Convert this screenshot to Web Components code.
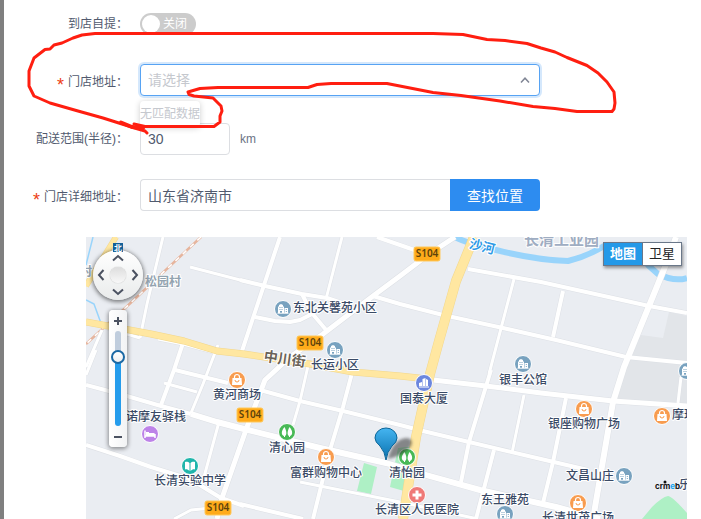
<!DOCTYPE html>
<html lang="zh-CN">
<head>
<meta charset="utf-8">
<title>门店设置</title>
<style>
html, body { margin: 0; min-height: 100%; }
body { background: #fff; color: #515a6e; font: 12px/18px "Liberation Sans", "Noto Sans CJK SC", sans-serif; }
</style>
</head>
<body>
<store-panel>
  <field-group>
    <switch-field label="到店自提：" text="关闭"></switch-field>
    <select-field label="门店地址：" required placeholder="请选择" empty="无匹配数据"></select-field>
  </field-group>
  <field-group>
    <range-field label="配送范围(半径)：" value="30">km</range-field>
    <search-field label="门店详细地址：" required value="山东省济南市">查找位置</search-field>
  </field-group>
  <store-map slot="map"></store-map>
  <red-note slot="note"></red-note>
</store-panel>

<script>
const FONT = '"Liberation Sans", "Noto Sans CJK SC", sans-serif';

class BaseElement extends HTMLElement {
  connectedCallback() {
    if (this.shadowRoot) return;
    this.attachShadow({ mode: 'open' }).innerHTML = this.render();
  }
}

customElements.define('store-panel', class extends BaseElement {
  render() {
    return `<style>
      :host { display: block; position: relative; box-sizing: border-box; min-height: 100vh; border-left: 4px solid #7f7f7f; padding-top: 8px; overflow: hidden; }
      form { display: flex; flex-direction: column; gap: 27px; max-width: 536px; }
    </style>
    <form><slot></slot></form><slot name="map"></slot><slot name="note"></slot>`;
  }
});

customElements.define('field-group', class extends BaseElement {
  render() {
    return `<style>:host { display: flex; flex-direction: column; gap: 24px; }</style><slot></slot>`;
  }
});

class FieldElement extends BaseElement {
  render() {
    return `<style>
      :host { display: grid; grid-template-columns: 124px 1fr; column-gap: 12px; align-items: center; min-height: 32px; }
      * { box-sizing: border-box; }
      .name { display: flex; justify-content: flex-end; align-items: center; gap: 4px; white-space: nowrap; font-size: 12px; line-height: 18px; }
      :host([required]) .name { padding-top: 3px; }
      .name i { color: #ed4014; font: 18px/18px ${FONT}; height: 12px; }
      .box { width: 100%; height: 32px; border: 1px solid #dcdee2; border-radius: 4px; padding: 0 7px; margin: 0; background: #fff; color: #515a6e; font: 14px ${FONT}; outline: none; }
      ${this.css()}
    </style>
    <label class="name" for="control">${this.hasAttribute('required') ? '<i>*</i>' : ''}<span>${this.getAttribute('label')}</span></label>
    ${this.control()}`;
  }
}

customElements.define('switch-field', class extends FieldElement {
  css() {
    return `
      .switch { position: relative; display: flex; align-items: center; justify-self: start; width: 56px; height: 22px; border-radius: 11px; padding: 0 9px 0 2px; gap: 3px; background: #ccc; color: #fff; font-size: 12px; }
      .switch input { appearance: none; margin: 0; width: 18px; height: 18px; border-radius: 9px; background: #fff; flex: none; }
      .switch span { white-space: nowrap; }`;
  }
  control() {
    return `<label class="switch"><input id="control" type="checkbox" role="switch"><span>${this.getAttribute('text')}</span></label>`;
  }
});

customElements.define('select-field', class extends FieldElement {
  css() {
    return `
      .wrap { position: relative; }
      select.box { display: block; appearance: none; border-color: #57a3f3; box-shadow: 0 0 0 2px rgba(45,140,240,.2); color: #c5c8ce; }
      svg { position: absolute; right: 10px; top: 11px; pointer-events: none; }
      .menu { position: absolute; z-index: 2; left: 0; top: 37px; height: 26px; line-height: 26px; background: #fff; color: #c5c8ce; border-radius: 4px; box-shadow: 0 1px 6px rgba(0,0,0,.2); white-space: nowrap; }`;
  }
  control() {
    return `<div class="wrap"><select id="control" class="box"><option>${this.getAttribute('placeholder')}</option></select>
      <svg width="10" height="10" viewBox="0 0 10 10" fill="none" stroke="#808695" stroke-width="1.5"><path d="M1 7.5 5 3.2 9 7.5"/></svg>
      <div class="menu">${this.getAttribute('empty')}</div></div>`;
  }
});

customElements.define('range-field', class extends FieldElement {
  css() {
    return `.wrap { display: flex; align-items: center; gap: 10px; } .wrap .box { width: 90px; } .unit { color: #6b7385; }`;
  }
  control() {
    return `<div class="wrap"><input id="control" class="box" type="text" value="${this.getAttribute('value')}"><span class="unit"><slot></slot></span></div>`;
  }
});

customElements.define('search-field', class extends FieldElement {
  css() {
    return `
      .wrap { display: flex; }
      .wrap .box { flex: 1; min-width: 0; border-radius: 4px 0 0 4px; border-right: 0; }
      button { width: 90px; height: 32px; border: 0; border-radius: 0 4px 4px 0; padding: 0; background: #2d8cf0; color: #fff; font: 14px ${FONT}; }`;
  }
  control() {
    return `<div class="wrap"><input id="control" class="box" type="text" value="${this.getAttribute('value')}"><button type="button"><slot></slot></button></div>`;
  }
});

/* Map geometry: one unit per pixel, origin at (86, 237). */
const ROADS = [
  [3, '163,237 156,266 147,304 140,338'], [3, '190,267 244,281'],
  [4, '240,280 265,286 302,294 327,298 342,303'],
  [3, '104,327 140,338'], [3, '102,330 86,367'], [3, '158,339 183,344 217,353'],
  [4, '183,343 174,370 161,405'], [4, '86,385 120,394 161,406 191,414'],
  [6, '191,414 217,422 244,429 320,448 386,463 426,475 480,490 556,507 600,519'],
  [4, '175,370 228,383'], [3, '164,383 197,392'], [3, '218,345 203,384 191,413'],
  [3, '96,350 86,375'], [4, '86,445 120,456 151,467 190,479 221,498 244,506'],
  [3, '219,422 204,477 201,485'], [3, '174,519 191,510 221,507'],
  [4, '280,237 242,351'], [3, '342,237 326,299'],
  [4, '255,317 275,321 290,322 300,320 312,314'], [4, '302,294 311,312 327,331'],
  [5, '455,237 429,254 400,276 373,296 323,334 290,357 265,380 247,427 222,498 217,519'],
  [4, '373,296 400,304 443,315 503,328 556,340 626,357 687,363'],
  [4, '377,237 400,245 420,252'], [3, '308,366 300,401 293,425'],
  [4, '260,390 300,401 343,411 400,425 423,431 469,442 541,459 588,470'],
  [4, '352,373 343,407 330,450 313,519'], [3, '300,482 400,502 478,519'],
  [4, '240,504 303,519'], [4, '468,269 541,282 649,306 687,313'],
  [3, '514,279 489,374'], [4, '491,370 469,442 461,482'], [4, '563,291 553,337'],
  [5, '433,380 486,386 541,393 613,401 687,406'], [3, '524,395 512,453'],
  [4, '494,450 476,519'], [4, '566,398 553,462 543,503'],
  [6, '676,237 669,257 649,306 624,367 613,402 593,519'], [3, '681,377 678,403']
];
const AVENUES = [
  [5, '116,237 86,286'],
  [6, '86,322 151,334 184,341 217,351 244,354 310,364 353,372 400,376 428,379'],
  [9, '474,237 456,281 439,341 430,374 416,437 403,519']
];
const ICONS = {
  home: ['#78a2bf', '<path fill="#fff" d="M-5 4v-6l1-1v-1l2-1 2 1v1l1 1v6h-2V2h-2v2zM1.500 4v-5H5v5z"/><path stroke="#78a2bf" d="M-3.500-1.500h1M-1.500-1.500h1M-3.500.5h1M-1.500.5h1M2.800.5h1M2.800 2.500h1"/><path stroke="#fff" d="M-5.500 4.200h11"/>'],
  tower: ['#6c87de', '<path fill="#fff" d="M-5 3V0l3-1v4zM-1.500 3v-7L1.500-5v8zM2 3v-7l2 1v6z"/><path stroke="#fff" d="M-5 4H5"/>'],
  bag: ['#f89c4f', '<path fill="#fff" d="M-4.500-2h9L5 5H-5z"/><path fill="none" stroke="#fff" stroke-width="1.200" d="M-2.500-2v-1a2.500 2.500 0 0 1 5 0v1"/><path fill="none" stroke="#f89c4f" d="M-2 0a2 2 0 0 0 4 0"/>'],
  park: ['#48b956', '<path fill="#fff" d="M-2.500-5C-6-1-6 3-3 4v1h1V4C0 3-.3-1-2.500-5ZM2.500-5C.3-1 0 3 2 4v1h1V4C6 3 6-1 2.500-5Z"/>'],
  book: ['#20b5ab', '<path fill="#fff" d="M-5-4c2-.5 3.500 0 4.500 1v8C-2 3.500-3.500 3-5 3.500ZM5-4C3-4.500 1.500-4 .5-3v8C2 3.500 3.500 3 5 3.500Z"/>'],
  bed: ['#bd83e8', '<path fill="none" stroke="#fff" stroke-width="1.500" d="M-5-3.500V4M-5 2H5M5 4V0"/><path fill="#fff" d="M-4-2h3v1h5l1 1v2h-9z"/>'],
  cross: ['#ef7a78', '<path stroke="#fff" stroke-width="3" d="M-4.500 0h9M0-4.500v9"/>']
};
/* kind, icon x, icon y, label, label x, label middle */
const PLACES = [
  ['home', 283, 309, '东北关馨苑小区', 293, 307], ['home', 335, 350, '长运小区', 311, 364],
  ['bag', 237, 380, '黄河商场', 213, 394], ['bed', 150, 434, '诺摩友驿栈', 126, 416],
  ['book', 190, 466, '长清实验中学', 154, 480], ['park', 287, 432, '清心园', 269, 447],
  ['bag', 326, 457, '富群购物中心', 290, 472], ['park', 407, 457, '清怡园', 389, 472],
  ['cross', 417, 495, '长清区人民医院', 375, 509], ['tower', 424, 383, '国泰大厦', 400, 398],
  ['home', 523, 364, '银丰公馆', 499, 379], ['bag', 584, 409, '银座购物广场', 548, 423],
  ['home', 505, 514, '东王雅苑', 481, 499], ['home', 624, 476, '文昌山庄', 566, 475],
  ['bag', 578, 503, '长清世茂广场', 542, 517], ['bag', 662, 416, '摩玛', 672, 414],
  ['home', 687, 371, '', 0, 0]
];
const SHIELDS = [[427, 254], [310, 343], [250, 415], [218, 508]];

customElements.define('store-map', class extends BaseElement {
  render() {
    const line = (color, extra) => ([w, p]) => `<polyline points="${p}" stroke="${color}" stroke-width="${w + extra}"/>`;
    const icons = PLACES.map(([k, x, y]) => `<g transform="translate(${x} ${y})"><circle r="8.500" fill="${ICONS[k][0]}" stroke="#fff"/>${ICONS[k][1]}</g>`).join('');
    const names = PLACES.filter(p => p[3]).map(p => `<text x="${p[4]}" y="${p[5] + 5}">${p[3]}</text>`).join('');
    const shields = SHIELDS.map(([x, y]) => `<rect x="${x - 13}" y="${y - 7}" width="26" height="14" rx="2" fill="#ffab1a" stroke="#ffc95c"/><text class="s" x="${x}" y="${y + 3}">S104</text>`).join('');
    return `<style>
      :host { display: block; position: relative; height: 282px; margin: 26px 14px 0 82px; overflow: hidden; background: #eaedf2; }
      .canvas { display: block; width: 100%; height: 282px; }
      text { font: 500 12px "Noto Sans CJK SC", sans-serif; fill: #3a4a66; stroke: #fff; stroke-width: 2px; stroke-linejoin: round; paint-order: stroke; }
      text.s { font: 600 10px "Noto Sans", sans-serif; fill: #5e430c; stroke: none; text-anchor: middle; }
      text.soft { fill: #93a3b0; font-weight: 700; }
      text.zone { fill: #9fadc2; font-size: 15px; font-weight: 700; }
      text.street { fill: #6a6359; font-size: 14px; font-weight: 700; text-anchor: middle; }
      text.water { fill: #2e9ae6; font-size: 13px; font-weight: 700; text-anchor: middle; }
      text.brand { font: 700 8px Inter, sans-serif; fill: #111; stroke: none; }
      text.brand .b { fill: #18a4ee; }
      map-pan { position: absolute; left: 7px; top: 6px; }
      map-zoom { position: absolute; left: 23px; top: 73px; }
      map-type { position: absolute; right: 5px; top: 5px; }
    </style>
    <svg class="canvas" viewBox="86 237 601 282" preserveAspectRatio="xMinYMin slice" aria-label="地图">
      <defs>
        <linearGradient id="pin" x2="0" y2="1"><stop stop-color="#45b5f1"/><stop offset="1" stop-color="#0870ad"/></linearGradient>
        <filter id="blur" x="-50%" y="-50%" width="200%" height="200%"><feGaussianBlur stdDeviation="1.500"/></filter>
      </defs>
      <path fill="#e2e5e9" d="M641 335l22 3 6-26 18 4v89l-74-4 11-36z"/>
      <path fill="#aef0c5" d="M364 463l13 4-6 27-14-3zM398 448l17-2-11 45-14-4zM642 519l10-12q10-10 16-11 4 0 19 17v6z"/>
      <g fill="none" stroke-linejoin="round">
        <path stroke="#99d4fb" stroke-width="1.500" d="M93 237 86 265M86 300l8 4 8 22"/>
        <path stroke="#99d4fb" stroke-width="6" d="M452 236q22 10 44 14 40 10 72 11 20-5 36-15 34 4 45 20l9 8q16 8 29 4"/>
        <path stroke="#e6b59e" stroke-width="2.500" d="M201 237 123 310 86 344"/>
        <path stroke="#fff" stroke-width="1.500" stroke-dasharray="5 5" d="M201 237 123 310 86 344"/>
        ${ROADS.map(line('#dde0e5', 1)).join('')}${ROADS.map(line('#fff', 0)).join('')}
        ${AVENUES.map(line('#f2d78d', 1)).join('')}${AVENUES.map(line('#ffe7a1', 0)).join('')}
      </g>
      ${icons}${shields}${names}
      <text class="soft" x="80" y="276">村</text><text class="soft" x="145" y="286">松园村</text>
      <text class="zone" x="524" y="245">长清工业园</text>
      <text class="street" transform="translate(284 364) rotate(8)">中川街</text>
      <text class="water" transform="translate(481 251) rotate(14)">沙河</text>
      <text x="679" y="489">乐</text>
      <text class="brand" x="655" y="489">crm<tspan class="b">e</tspan>b</text><circle cx="665" cy="482" r="1.500" fill="#111"/>
      <path d="M388 459q4-19 18-21 8 0 5 8-6 9-23 13z" fill="#333" opacity=".55" filter="url(#blur)"/>
      <path d="M386 460q-1-8-6-14-5-4-5-8a11 10 0 0 1 22 0q0 4-5 8-5 6-6 14z" fill="url(#pin)" stroke="#0b6598"/>
    </svg>
    <map-pan></map-pan><map-zoom></map-zoom><map-type></map-type>`;
  }
});

customElements.define('map-pan', class extends BaseElement {
  render() {
    const arrow = (name, cls, turn) => `<button type="button" class="${cls}" aria-label="${name}"><svg width="14" height="8" viewBox="0 0 14 8" style="transform:rotate(${turn}deg)"><path d="M2 6.500 7 2 12 6.500" fill="none" stroke="#4b5261" stroke-width="2"/></svg></button>`;
    return `<style>
      :host { display: block; width: 50px; }
      .north { display: block; position: relative; z-index: 1; width: 10px; height: 9px; margin: 0 auto; background: #145f98; color: #fff; font: 700 8px/9px "Noto Sans CJK SC", sans-serif; text-align: center; }
      .dial { display: grid; grid-template: repeat(3, 1fr) / repeat(3, 1fr); width: 50px; height: 50px; margin-top: -2px; border-radius: 50%; background: linear-gradient(#fff, #e9ebeb); box-shadow: 0 1px 4px 1px rgba(0,0,0,.5); }
      button { display: grid; place-items: center; min-width: 0; padding: 0; border: 0; background: none; }
      .n { grid-area: 1 / 2; } .w { grid-area: 2 / 1; } .e { grid-area: 2 / 3; } .s { grid-area: 3 / 2; }
      .hub { grid-area: 2 / 2; border-radius: 50%; background: linear-gradient(#ddd, #f8f8f8); box-shadow: 0 0 1px #999; }
    </style><span class="north">北</span>
    <div class="dial">${arrow('向北', 'n', 0)}${arrow('向西', 'w', -90)}<span class="hub"></span>${arrow('向东', 'e', 90)}${arrow('向南', 's', 180)}</div>`;
  }
});

customElements.define('map-zoom', class extends BaseElement {
  render() {
    return `<style>
      :host { display: flex; flex-direction: column; align-items: center; width: 18px; height: 137px; border-radius: 4px; background: linear-gradient(90deg, #fff, #f2f3f4); box-shadow: 0 1px 4px 1px rgba(0,0,0,.4); }
      button { flex: 1; width: 18px; padding: 0; border: 0; background: none; display: grid; place-items: center; }
      input { appearance: none; writing-mode: vertical-lr; direction: rtl; flex: none; width: 14px; height: 95px; margin: 0; background: none; }
      input::-webkit-slider-runnable-track { width: 6px; height: 95px; border-radius: 3px; background: linear-gradient(#c0cddd 27%, #259cec 27%); }
      input::-webkit-slider-thumb { appearance: none; width: 14px; height: 14px; margin-left: -4px; box-sizing: border-box; border: 2px solid #1c69a4; border-radius: 50%; background: linear-gradient(#fff, #f0f0f0); }
    </style>
    <button type="button" aria-label="放大"><svg width="8" height="8"><path d="M0 4h8M4 0v8" stroke="#4b5261" stroke-width="2"/></svg></button>
    <input type="range" min="0" max="100" value="77" aria-label="缩放级别">
    <button type="button" aria-label="缩小"><svg width="8" height="8"><path d="M0 4h8" stroke="#4b5261" stroke-width="2"/></svg></button>`;
  }
});

customElements.define('map-type', class extends BaseElement {
  render() {
    return `<style>
      :host { display: flex; box-sizing: border-box; height: 24px; border: 1px solid #6a7789; background: #fff; box-shadow: 1px 2px 3px rgba(0,0,0,.4); }
      button { width: 39px; padding: 0; border: 0; background: #fff; color: #222; font: 13px/20px ${FONT}; }
      .on { width: 38px; background: #2499e8; color: #fff; font-weight: 700; }
      .off { border-left: 1px solid #6a7789; }
    </style><button type="button" class="on">地图</button><button type="button" class="off">卫星</button>`;
  }
});

customElements.define('red-note', class extends BaseElement {
  render() {
    return `<style>:host { position: absolute; left: 0; top: 0; z-index: 5; pointer-events: none; } svg { display: block; }</style>
    <svg width="630" height="140" viewBox="4 0 630 140" fill="none" stroke="#ff1e10" stroke-width="3" stroke-linejoin="round" stroke-linecap="round">
      <path d="M147 133 145 131 138 129 122 124 103 118 78 111 50 103 34 96 29 86V71L34 58 45 49.500 50 49 54 45 62 43 73 38 82 35 95 33.500H433L463 34.500 487 39.500 505 40.500 527 43.500 541 48 555 52 567 57.500 587 65.500 598 73 607 82 614 92 615 103 614 109 612 111.500H577L555 108.500 533 106.500 500 101 461 95.500 433 92.500 387 83.500H331L317 84.500 308 87.500H218L200 88.500 188 92 189 94.500 194 96 213 98 221 106 222 111 220 116V122L214 126.500H145L134 124"/>
      <path stroke-width="4" d="M121 122.500 132 127 143 128"/>
    </svg>`;
  }
});
</script>
</body>
</html>
